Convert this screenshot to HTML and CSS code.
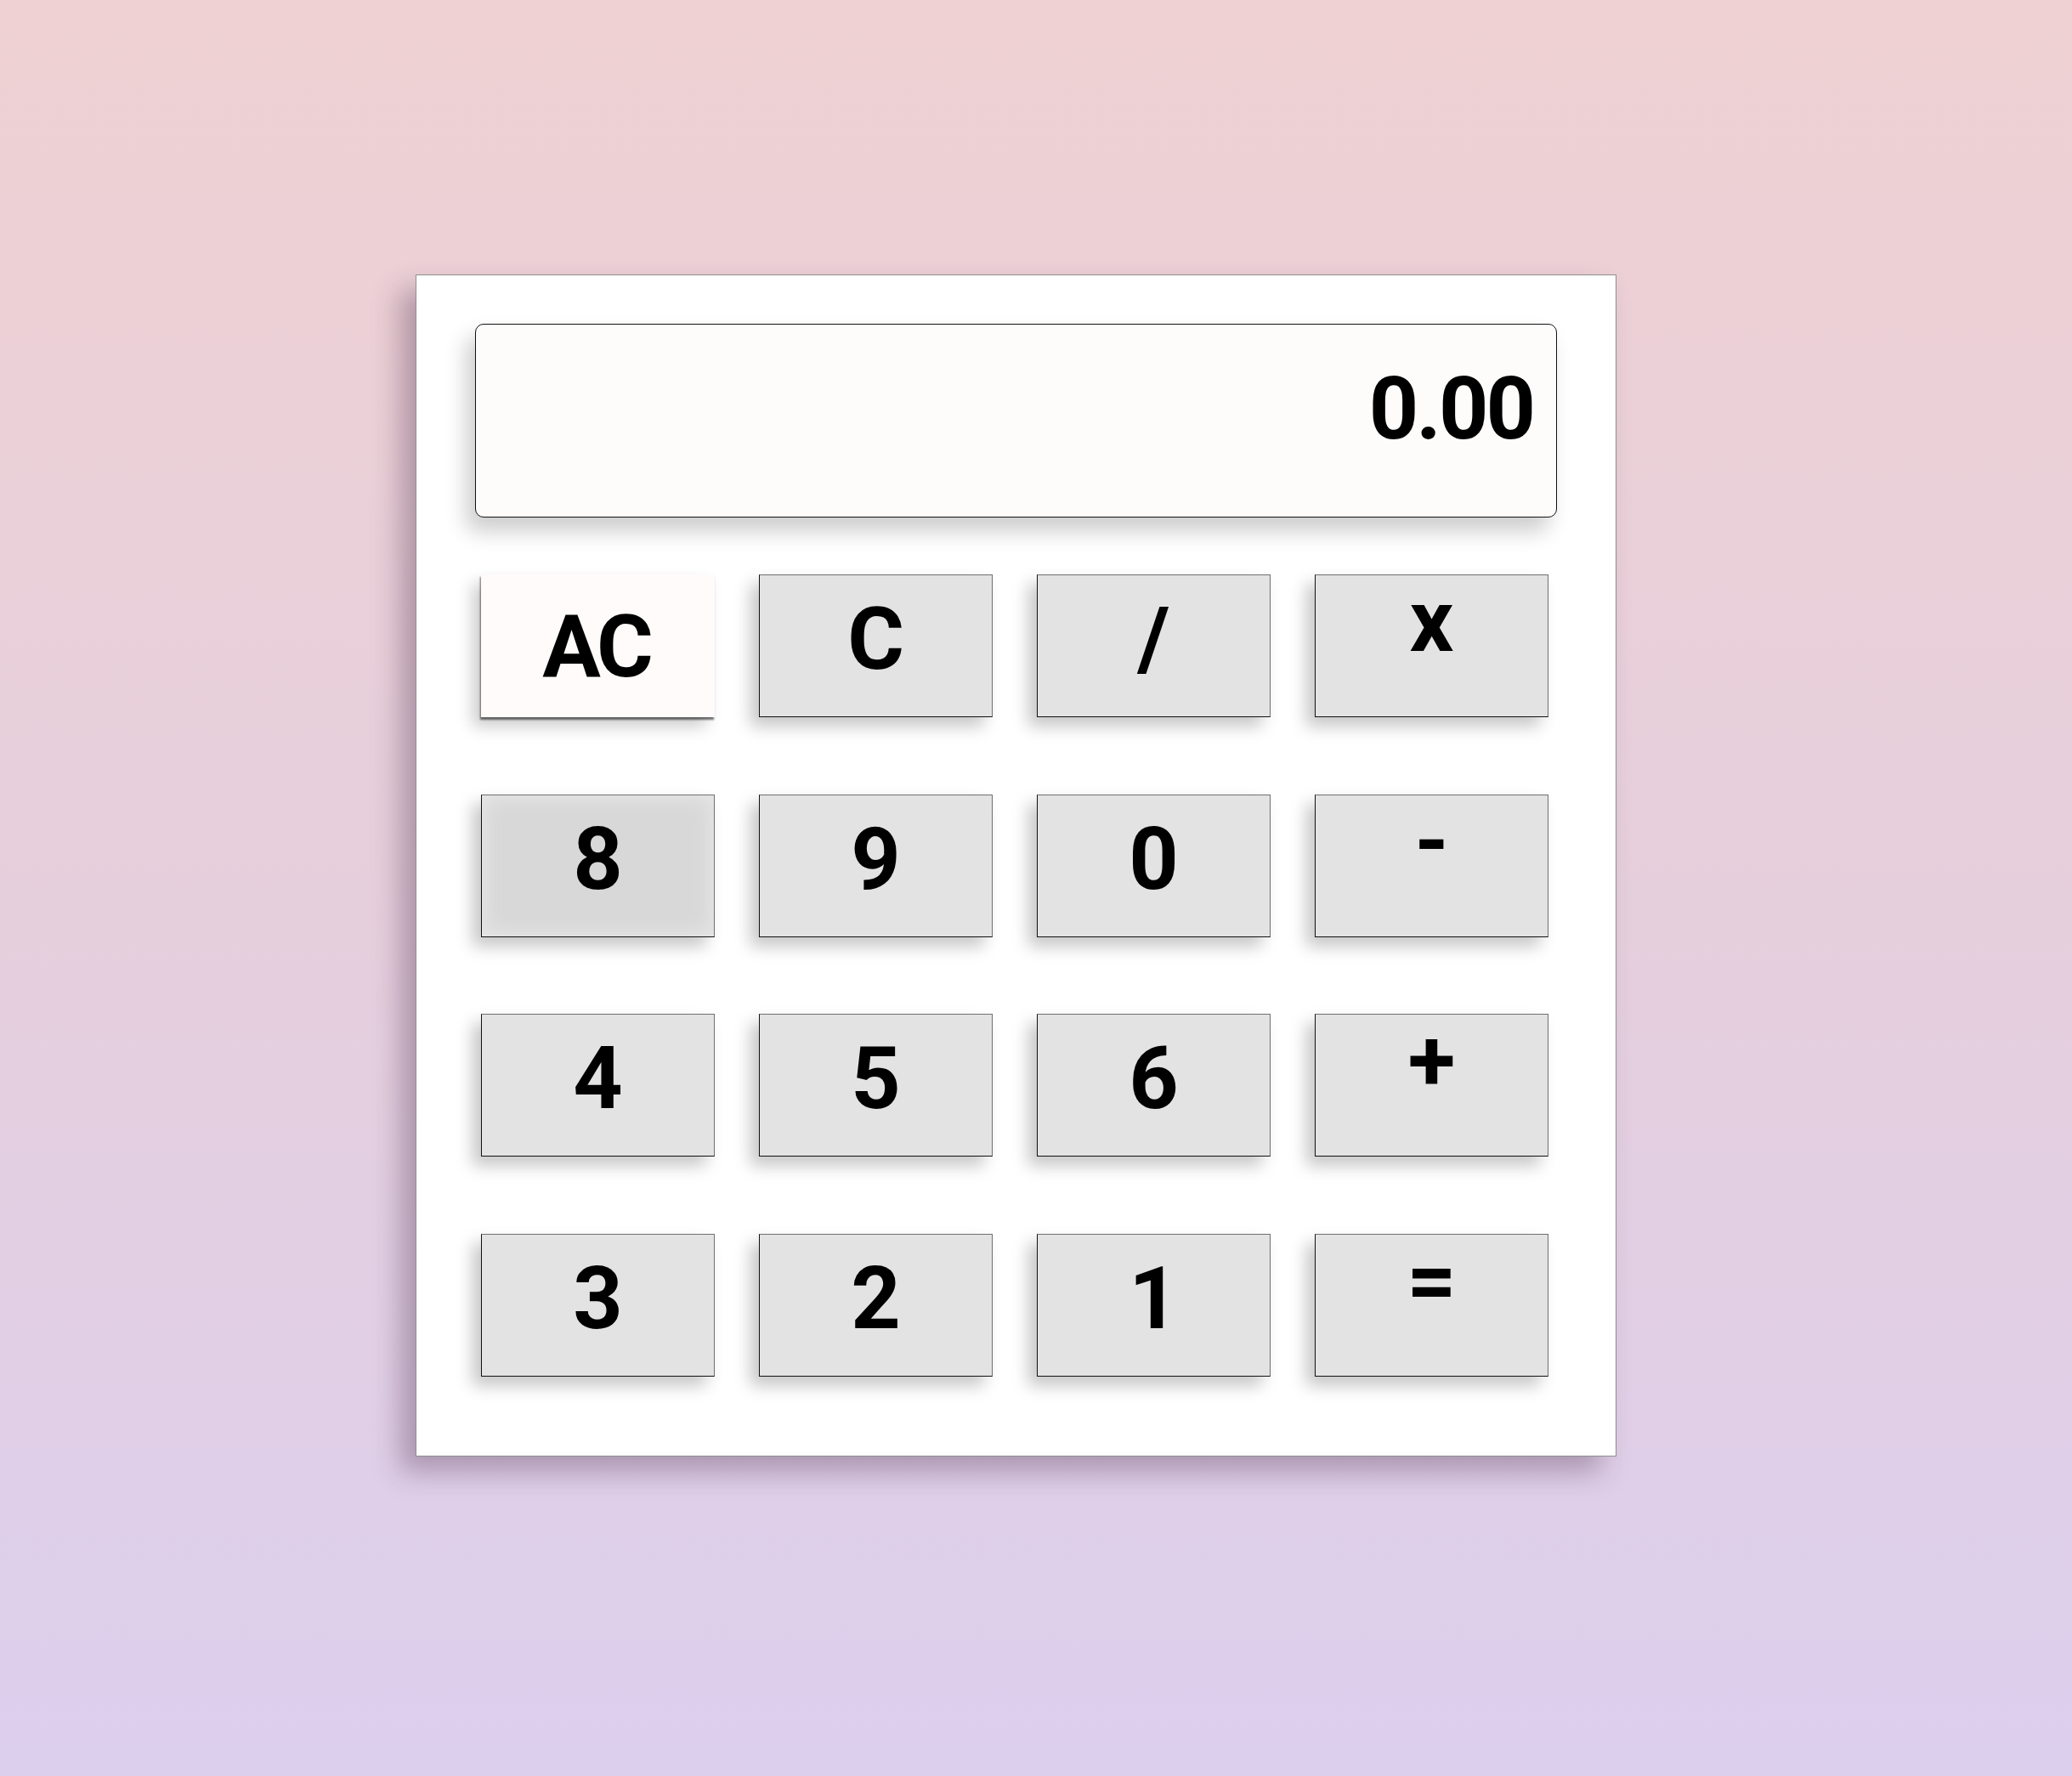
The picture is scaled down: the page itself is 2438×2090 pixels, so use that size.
FILE: index.html
```html
<!DOCTYPE html>
<html lang="en">
<head>
<meta charset="utf-8">
<title>Calculator</title>
<link rel="stylesheet" href="styles.css">
</head>
<body>
<main class="page">
  <section class="calculator">
    <div class="display">0.00</div>
    <div class="keys">
      <div class="key key-ac">AC</div>
      <div class="key">C</div>
      <div class="key">/</div>
      <div class="key key-op">x</div>

      <div class="key key-hover">8</div>
      <div class="key">9</div>
      <div class="key">0</div>
      <div class="key key-op">-</div>

      <div class="key">4</div>
      <div class="key">5</div>
      <div class="key">6</div>
      <div class="key key-op">+</div>

      <div class="key">3</div>
      <div class="key">2</div>
      <div class="key">1</div>
      <div class="key key-op">=</div>
    </div>
  </section>
</main>
</body>
</html>
```

FILE: styles.css
```css
html, body {
  margin: 0;
  padding: 0;
}

body {
  min-height: 2090px;
  background: linear-gradient(to bottom, #efd1d3 0%, #e6cfdc 50%, #dccfee 100%);
  font-family: Roboto, "Liberation Sans", Arial, sans-serif;
  color: #000;
}

.page {
  padding: 323px 0 0 489px;
}

.calculator {
  box-sizing: border-box;
  width: 1413px;
  height: 1391px;
  background: #ffffff;
  border: 1px solid #8f8f8f;
  padding: 57px 69px 0 69px;
  box-shadow: -18px 18px 30px rgba(70, 40, 70, 0.34);
}

.display {
  box-sizing: border-box;
  height: 228px;
  background: #fdfcfb;
  border: 1px solid #111;
  border-radius: 10px;
  padding: 48px 27px 0 0;
  text-align: right;
  font-size: 102px;
  line-height: 102px;
  font-weight: 700;
  letter-spacing: -3px;
  box-shadow: -10px 16px 26px rgba(0, 0, 0, 0.2);
}

.keys {
  margin: 67px 0 0 7px;
  display: grid;
  grid-template-columns: repeat(4, 275px);
  grid-auto-rows: 168px;
  column-gap: 52px;
  row-gap: 90.67px;
}

.key {
  box-sizing: border-box;
  height: 168px;
  background: #e3e3e3;
  border: 1px solid;
  border-color: #707070 #707070 #111 #111;
  padding-top: 24px;
  text-align: center;
  font-size: 102px;
  line-height: 102px;
  font-weight: 700;
  box-shadow: -10px 11px 18px rgba(0, 0, 0, 0.22);
}

.key-op {
  padding-top: 3px;
}

.key-ac {
  background: #fffbfa;
  border: none;
  padding-top: 34px;
  letter-spacing: -4px;
  text-indent: -4px;
  box-shadow: -1px 3px 2px rgba(0, 0, 0, 0.55), -10px 11px 18px rgba(0, 0, 0, 0.2);
}

.key-hover {
  background: #d8d8d8;
  box-shadow: inset 0 0 22px 4px #e6e6e6, -10px 11px 18px rgba(0, 0, 0, 0.22);
}
```
